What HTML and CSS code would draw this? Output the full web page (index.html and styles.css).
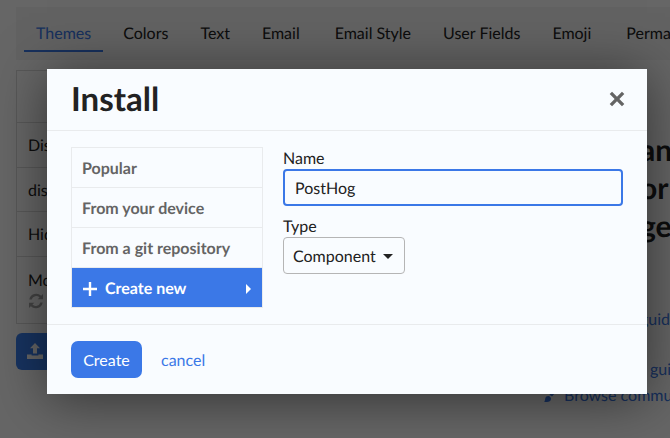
FILE: index.html
```html
<!DOCTYPE html>
<html lang="en">
<head>
<meta charset="utf-8">
<title>Install</title>
<link rel="stylesheet" href="styles.css">
</head>
<body>
<div class="page">
  <nav class="tabs">
    <a class="tab active">Themes</a>
    <a class="tab">Colors</a>
    <a class="tab">Text</a>
    <a class="tab wide">Email</a>
    <a class="tab">Email Style</a>
    <a class="tab">User Fields</a>
    <a class="tab wide">Emoji</a>
    <a class="tab">Permalinks</a>
  </nav>
  <div class="columns">
    <div class="left">
      <div class="table">
        <div class="row head"></div>
        <div class="row r1">Discourse</div>
        <div class="row r2">discourse</div>
        <div class="row r3">Hide</div>
        <div class="row r4">
          <div>More</div>
          <svg class="sync" viewBox="0 0 16 16" width="16" height="16"><path fill="#a8a8a8" d="M13.200 2.800A7 7 0 0 0 1.300 6.500h2.400a4.700 4.700 0 0 1 7.900-2.100L9.600 6.300H15V1zM2.800 13.200A7 7 0 0 0 14.700 9.500h-2.400a4.700 4.700 0 0 1-7.900 2.100l2-1.900H1V15z"/></svg>
        </div>
      </div>
      <div class="upload">
        <svg viewBox="0 0 16 16" width="16" height="16"><path fill="#fff" d="M8 0l5 5.200H10v5.300H6V5.200H3zM0 11.500h4.600v1h6.800v-1H16V16H0z"/></svg>
      </div>
    </div>
    <div class="right">
      <div class="heading">an<br>or<br>ge</div>
      <a class="link l1">guide</a>
      <a class="link l2">guide</a>
      <a class="link l3"><svg class="brush" viewBox="0 0 14 14" width="14" height="14"><path fill="#3b78e7" d="M0 13.500c1.200-.8 1-2 1.300-3.300C1.700 8.700 3 7.800 4.300 7.900c1.500.1 2.700 1.300 2.700 2.800 0 2.200-2 3.300-4 3.300-1 0-2.200 0-3-.5zM5.200 6.900L11.500.5c.6-.6 1.400-.6 1.900-.1s.5 1.300-.1 1.900L8 8.500c-.4-.7-1.800-1.500-2.800-1.600z"/></svg>Browse community</a>
    </div>
  </div>
</div>

<div class="overlay"></div>

<div class="modal">
  <header class="modal-head">
    <h1 class="title">Install</h1>
    <svg class="close" viewBox="0 0 16 16" width="18" height="18"><path fill="#646464" d="M3.600 1.500L8 5.900l4.400-4.400 2.100 2.100L10.100 8l4.400 4.400-2.100 2.100L8 10.100l-4.400 4.400-2.100-2.100L5.900 8 1.500 3.600z"/></svg>
  </header>
  <div class="modal-body">
    <ul class="options">
      <li class="option">Popular</li>
      <li class="option">From your device</li>
      <li class="option">From a git repository</li>
      <li class="option selected">
        <svg viewBox="0 0 14 14" width="14" height="14"><path fill="#fff" d="M5.800 0h2.400v5.800H14v2.400H8.200V14H5.800V8.200H0V5.800h5.800z"/></svg>
        <span class="option-label">Create new</span>
        <svg class="caret-right" viewBox="0 0 5 10" width="5" height="10"><path fill="#fff" d="M0 0l5 5-5 5z"/></svg>
      </li>
    </ul>
    <form class="fields">
      <label class="label">Name</label>
      <div class="input">PostHog</div>
      <label class="label type-label">Type</label>
      <div class="select">Component
        <svg viewBox="0 0 10 5" width="10" height="5"><path fill="#222" d="M0 0h10L5 5z"/></svg>
      </div>
    </form>
  </div>
  <footer class="modal-foot">
    <button class="create" type="button">Create</button>
    <a class="cancel">cancel</a>
  </footer>
</div>
</body>
</html>
```

FILE: styles.css
```css
* { box-sizing: border-box; }
html, body { margin: 0; height: 100%; }
body {
  width: 670px;
  height: 438px;
  overflow: hidden;
  position: relative;
  background: #fff;
  font-family: Lato, "Liberation Sans", sans-serif;
  color: #222;
  text-rendering: geometricPrecision;
}
.page { padding: 7px 0 0 16px; width: 670px; height: 438px; overflow: hidden; }
.tabs {
  display: flex;
  height: 53px;
  padding: 10px 0 0 8px;
  background: #f4f4f4;
  white-space: nowrap;
  font-size: 16px;
}
.tab { display: block; height: 35px; padding: 7px 12px 0; margin-right: 8px; line-height: 20px; color: #222; }
.tab.wide { margin-right: 11px; }
.tab.active { color: #3b78e7; border-bottom: 2px solid #3b78e7; }
.columns { display: flex; margin-top: 10px; }
.left { width: 500px; flex: none; margin-right: 28px; }
.table { border: 1px solid #ddd; }
.row { padding: 0 12px 0 11px; font-size: 16px; border-bottom: 1px solid #ddd; white-space: nowrap; }
.head { height: 52px; }
.r1, .r2, .r3 { height: 44.500px; line-height: 46px; }
.r4 { height: 66px; padding-top: 14px; border-bottom: 0; line-height: 20px; }
.sync { display: block; margin-top: 2px; }
.upload {
  width: 120px; height: 37px; margin-top: 9px;
  background: #3b80ef; border-radius: 6px;
  padding: 10px 0 0 11px;
}
.right { white-space: nowrap; }
.heading { font-size: 30px; font-weight: 700; line-height: 38px; margin: 61px 0 0 96px; color: #222; }
.link { display: block; color: #3b78e7; font-size: 16px; line-height: 20px; }
.brush { margin-right: 6px; vertical-align: -1px; }
.l1 { margin: 65px 0 0 96px; }
.l2 { margin: 30px 0 0 106px; }
.l3 { margin-top: 6px; }

.overlay {
  position: absolute;
  inset: 0;
  background: rgba(0, 0, 0, 0.6);
}
.modal {
  position: absolute;
  left: 47px;
  top: 69px;
  width: 600px;
  height: 325px;
  background: #f9fcff;
  box-shadow: 0 5px 50px rgba(0, 0, 0, 0.5);
  display: flex;
  flex-direction: column;
}
.modal-head {
  height: 62px;
  flex: none;
  padding: 0 21px 0 24px;
  border-bottom: 1px solid #e9ebed;
  display: flex;
  align-items: center;
  justify-content: space-between;
}
.title { margin: -2px 0 0; font-size: 33px; line-height: 60px; font-weight: 700; color: #222; }
.close { display: block; margin-top: -1px; }
.modal-body {
  height: 194px;
  flex: none;
  padding: 16px 24px 0;
  border-bottom: 1px solid #e9ebed;
  display: flex;
  gap: 20px;
}
.options {
  list-style: none;
  margin: 0;
  padding: 0;
  width: 192px;
  height: 161px;
  border: 1px solid #e9ebed;
  flex: none;
}
.option {
  height: 40px;
  padding: 0 10px;
  line-height: 41px;
  font-size: 16px;
  font-weight: 700;
  color: #646464;
  border-bottom: 1px solid #e9ebed;
  white-space: nowrap;
}
.option.selected {
  height: 39px;
  border-bottom: 0;
  background: #3b78e7;
  color: #fff;
  display: flex;
  align-items: center;
  padding: 2px 11px 0;
}
.option-label { margin-left: 8px; flex: 1; }
.fields { flex: 1; display: block; margin-top: 2px; }
.label { display: block; height: 18px; padding-top: 1px; font-size: 16px; line-height: 18px; color: #222; }
.input {
  width: 340px;
  height: 37px;
  margin-top: 2px;
  border: 2px solid #3b78e7;
  border-radius: 4px;
  padding: 0 10px;
  line-height: 35px;
  font-size: 16px;
  color: #222;
}
.type-label { margin-top: 11px; }
.select {
  width: 122px;
  height: 37px;
  margin-top: 2px;
  border: 1px solid #b5b5b5;
  border-radius: 4px;
  padding: 2px 11px 0 9px;
  font-size: 16px;
  color: #222;
  display: flex;
  align-items: center;
  justify-content: space-between;
}
.modal-foot {
  flex: 1;
  padding: 16px 24px 0;
  display: flex;
  align-items: flex-start;
  gap: 19px;
}
.create {
  width: 71px;
  height: 37px;
  border: 0;
  border-radius: 7px;
  background: #3b78e7;
  color: #fff;
  font: 16px/37px Lato, "Liberation Sans", sans-serif;
  padding: 0;
}
.cancel { color: #3b78e7; font-size: 16px; line-height: 39px; }
```
